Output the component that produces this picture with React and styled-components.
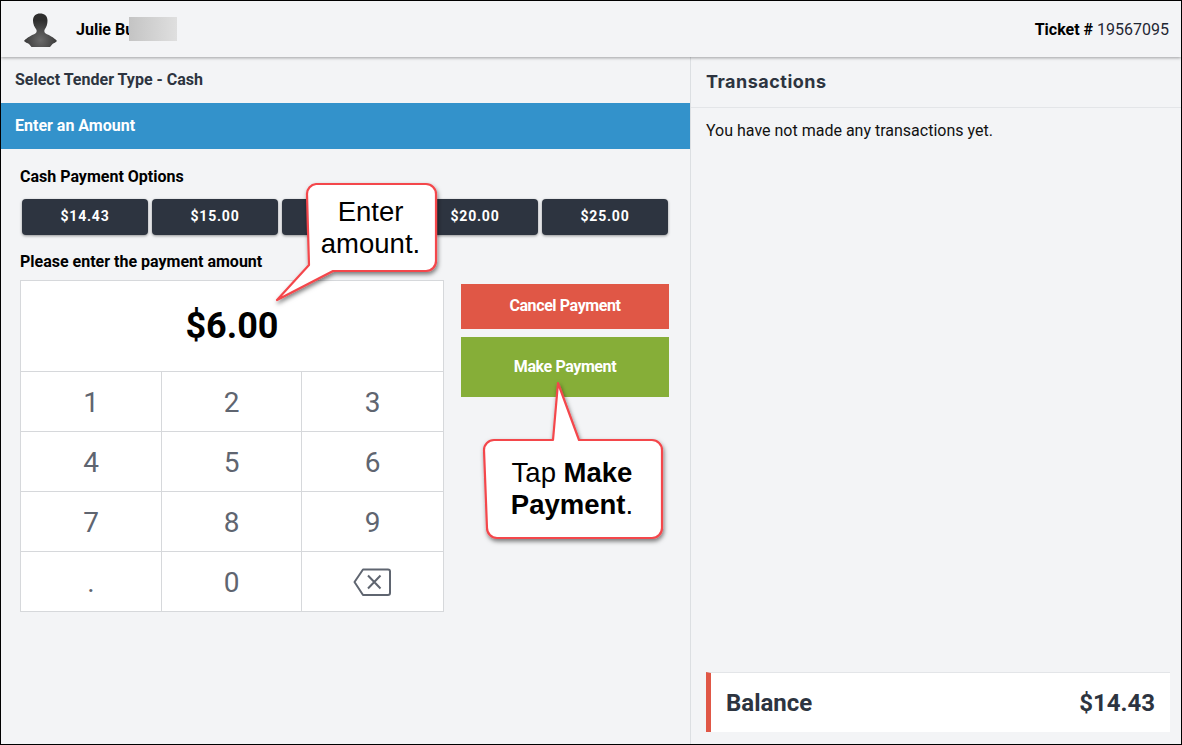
import React from "react";
import styled, { createGlobalStyle } from "styled-components";

const GlobalStyle = createGlobalStyle`
  html, body {
    margin: 0;
    padding: 0;
    background: #f3f4f6;
  }
  * {
    box-sizing: border-box;
  }
`;

const Page = styled.div`
  position: relative;
  width: 1182px;
  height: 745px;
  overflow: hidden;
  display: flex;
  flex-direction: column;
  background: #f3f4f6;
  border: 1px solid #000;
  font-family: Roboto, "Liberation Sans", sans-serif;
`;

const Header = styled.header`
  height: 56px;
  flex: none;
  display: flex;
  align-items: center;
  padding: 0 12px 0 21px;
  background: #f3f4f6;
  box-shadow: 0 1px 3px rgba(0, 0, 0, 0.35);
  position: relative;
  z-index: 1;
`;

const Avatar = styled.svg`
  width: 36px;
  height: 36px;
  margin-right: 18px;
`;

const UserName = styled.span`
  position: relative;
  font-size: 16px;
  font-weight: 700;
  color: #000;
`;

const Blur = styled.span`
  position: absolute;
  left: 53px;
  top: -3px;
  width: 48px;
  height: 24px;
  background: linear-gradient(90deg, #c4c4c4, #dfdfdf);
`;

const Ticket = styled.div`
  margin-left: auto;
  font-size: 16px;
  color: #1f2733;
  b {
    color: #000;
  }
`;

const Body = styled.div`
  flex: 1;
  display: flex;
  min-height: 0;
`;

const Left = styled.main`
  width: 690px;
  flex: none;
  border-right: 1px solid #dcdfe2;
`;

const TenderTitle = styled.div`
  height: 46px;
  padding: 13px 14px 0;
  font-size: 16px;
  font-weight: 700;
  color: #2d3440;
`;

const StepBar = styled.div`
  height: 46px;
  display: flex;
  align-items: center;
  padding: 0 0 2px 14px;
  background: #3392cb;
  color: #fff;
  font-size: 16px;
  font-weight: 700;
`;

const Section = styled.section`
  padding: 19px 21px 0 19px;
`;

const Label = styled.div`
  font-size: 16px;
  font-weight: 700;
  color: #000;
  line-height: 17px;
`;

const Options = styled.div`
  display: flex;
  gap: 4px;
  margin: 14px 0 18px 2px;
`;

const Option = styled.button`
  width: 126px;
  height: 36px;
  padding: 0 0 2px;
  border: 0;
  border-radius: 4px;
  background: #2d3440;
  color: #fff;
  font-family: inherit;
  font-size: 14px;
  font-weight: 700;
  letter-spacing: 0.8px;
  box-shadow: 0 1px 3px rgba(0, 0, 0, 0.4);
`;

const PayRow = styled.div`
  display: flex;
  margin-top: 10px;
`;

const Keypad = styled.div`
  width: 424px;
  flex: none;
  background: #fff;
  border: 1px solid #d6d8db;
`;

const Amount = styled.div`
  height: 91px;
  display: flex;
  align-items: center;
  justify-content: center;
  font-size: 36px;
  font-weight: 700;
  color: #000;
  border-bottom: 1px solid #d6d8db;
`;

const Keys = styled.div`
  display: grid;
  grid-template-columns: 141px 140px 1fr;
  grid-template-rows: repeat(3, 60px) 59px;
`;

const Key = styled.div`
  display: flex;
  align-items: center;
  justify-content: center;
  padding-top: 1px;
  font-size: 28px;
  font-weight: 400;
  color: #5f6570;
  border-right: ${(p) => (p.$last ? "0" : "1px solid #d6d8db")};
  border-bottom: ${(p) => (p.$bottom ? "0" : "1px solid #d6d8db")};
`;

const BackspaceSvg = styled.svg`
  width: 38px;
  height: 28px;
  margin: 0 1px 1px 0;
`;

const Actions = styled.div`
  width: 208px;
  flex: none;
  margin: 4px 0 0 17px;
  display: flex;
  flex-direction: column;
  gap: 8px;
`;

const Action = styled.button`
  height: ${(p) => p.$height}px;
  padding: 0 0 2px;
  border: 0;
  background: ${(p) => p.$color};
  color: #fff;
  font-family: inherit;
  font-size: 16px;
  font-weight: 700;
  letter-spacing: -0.4px;
`;

const Right = styled.aside`
  flex: 1;
  display: flex;
  flex-direction: column;
  min-width: 0;
`;

const TransTitle = styled.div`
  height: 51px;
  padding: 14px 15px 0;
  font-family: Inter, "Open Sans", sans-serif;
  font-size: 18px;
  font-weight: 700;
  letter-spacing: 0.5px;
  color: #2d3440;
  border-bottom: 1px solid #e3e5e8;
`;

const Empty = styled.div`
  padding: 13px 15px 0;
  font-size: 16px;
  color: #111;
  flex: 1;
`;

const Balance = styled.div`
  height: 60px;
  margin: 0 11px 12px 15px;
  display: flex;
  align-items: center;
  justify-content: space-between;
  padding: 0 15px 0 15px;
  background: #fff;
  border-left: 5px solid #e05746;
  border-top: 1px solid #e3e5e8;
  font-size: 24px;
  font-weight: 700;
  color: #2d3440;
`;

const CalloutShape = styled.svg`
  position: absolute;
  left: -1px;
  top: -1px;
  width: 1182px;
  height: 745px;
  z-index: 2;
  pointer-events: none;
`;

const CalloutText = styled.div`
  position: absolute;
  z-index: 3;
  left: ${(p) => p.$x}px;
  top: ${(p) => p.$y}px;
  width: ${(p) => p.$w}px;
  text-align: center;
  font-family: "Liberation Sans", Arial, sans-serif;
  font-size: 27.500px;
  line-height: 32px;
  color: #000;
`;

const keys = ["1", "2", "3", "4", "5", "6", "7", "8", "9", ".", "0", "back"];
const amounts = ["$14.43", "$15.00", "", "$20.00", "$25.00"];

function BackspaceIcon() {
  return (
    <BackspaceSvg viewBox="0 0 38 28" fill="none" stroke="#5f6570" strokeWidth="2" strokeLinejoin="round">
      <path d="M10 1.5H35a2 2 0 0 1 2 2V25a2 2 0 0 1-2 2H10L1.5 14Z" />
      <path d="M15 7.5 27.5 20.5M27.5 7.5 15 20.5" />
    </BackspaceSvg>
  );
}

export default function App() {
  return (
    <>
      <GlobalStyle />
      <Page>
        <Header>
          <Avatar viewBox="0 0 36 36">
            <defs>
              <radialGradient id="bust" cx="0.5" cy="0.8" r="0.6">
                <stop offset="0" stopColor="#6a6a6a" />
                <stop offset="0.6" stopColor="#474747" />
                <stop offset="1" stopColor="#2e2e2e" />
              </radialGradient>
            </defs>
            <path
              fill="url(#bust)"
              d="M18 2.500c4.500 0 7.500 2.500 7.500 7 0 3.500-1 6.500-2.800 9-.7 1.500-.4 3 1 4 3 1.800 8 3.500 11.300 7.500-1 1.200-3 2.200-4.500 3-1 1-1.500 2-2.500 3H9.500c-1-1-1.500-2-2.500-3-1.500-.8-4-1.800-5-3 3.300-4 8.300-5.700 11.300-7.500 1.400-1 1.700-2.500 1-4-1.800-2.500-3.300-5.500-3.300-9 0-4.500 3-7 7-7Z"
            />
          </Avatar>
          <UserName>
            Julie Bu
            <Blur />
          </UserName>
          <Ticket>
            <b>Ticket #</b> 19567095
          </Ticket>
        </Header>
        <Body>
          <Left>
            <TenderTitle>Select Tender Type - Cash</TenderTitle>
            <StepBar>Enter an Amount</StepBar>
            <Section>
              <Label>Cash Payment Options</Label>
              <Options>
                {amounts.map((a, i) => (
                  <Option key={i}>{a}</Option>
                ))}
              </Options>
              <Label>Please enter the payment amount</Label>
              <PayRow>
                <Keypad>
                  <Amount>$6.00</Amount>
                  <Keys>
                    {keys.map((k, i) => (
                      <Key key={k} $last={i % 3 === 2} $bottom={i > 8}>
                        {k === "back" ? <BackspaceIcon /> : k}
                      </Key>
                    ))}
                  </Keys>
                </Keypad>
                <Actions>
                  <Action $height={45} $color="#e05746">Cancel Payment</Action>
                  <Action $height={60} $color="#86ae38">Make Payment</Action>
                </Actions>
              </PayRow>
            </Section>
          </Left>
          <Right>
            <TransTitle>Transactions</TransTitle>
            <Empty>You have not made any transactions yet.</Empty>
            <Balance>
              <span>Balance</span>
              <span>$14.43</span>
            </Balance>
          </Right>
        </Body>

        <CalloutShape viewBox="0 0 1182 745">
          <defs>
            <filter id="callShadow" x="-20%" y="-20%" width="140%" height="140%">
              <feDropShadow dx="1" dy="2.500" stdDeviation="2" floodColor="#000" floodOpacity="0.5" />
            </filter>
          </defs>
          <g fill="#fff" stroke="#f4474c" strokeWidth="2.200" strokeLinejoin="round" filter="url(#callShadow)">
            <path d="M316 184H426a10 10 0 0 1 10 10V261a10 10 0 0 1-10 10H333L277 300 309 265L307 194a10 10 0 0 1 9-10Z" />
            <path d="M494 440H553L558 383 579 440H652a10 10 0 0 1 10 10V528a10 10 0 0 1-10 10H497a10 10 0 0 1-10-10L484 450a10 10 0 0 1 10-10Z" />
          </g>
        </CalloutShape>
        <CalloutText $x={304.5} $y={195} $w={130}>Enter amount.</CalloutText>
        <CalloutText $x={483.5} $y={456} $w={175}>
          Tap <b>Make Payment</b>.
        </CalloutText>
      </Page>
    </>
  );
}
